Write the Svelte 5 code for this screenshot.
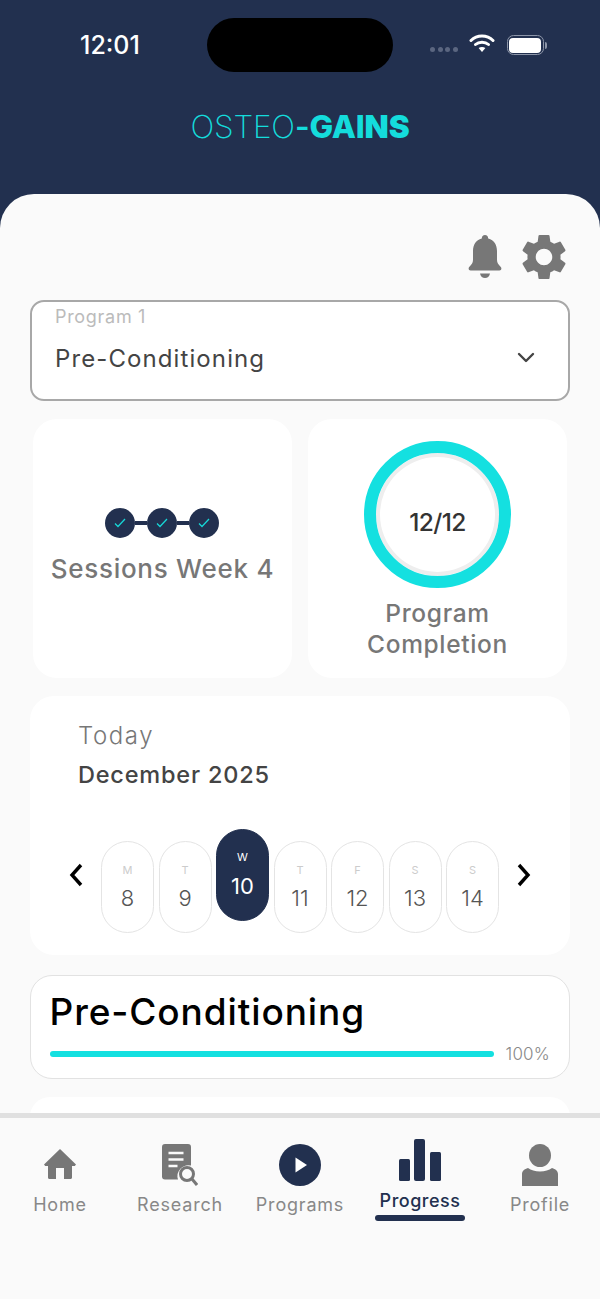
<script>
  const days = [
    { l: 'M', n: 8 }, { l: 'T', n: 9 }, { l: 'W', n: 10, active: true }, { l: 'T', n: 11 },
    { l: 'F', n: 12 }, { l: 'S', n: 13 }, { l: 'S', n: 14 }
  ];
</script>

<div class="screen">
  <header class="top">
    <div class="status">
      <span class="time">12:01</span>
      <div class="island"></div>
      <div class="sys">
        <span class="signal"><i></i><i></i><i></i><i></i></span>
        <svg class="wifi" width="26" height="20" viewBox="0 0 26 20" fill="none" stroke="#fff" stroke-width="3" stroke-linecap="round">
          <path d="M2 7.5C8 1.6 18 1.6 24 7.5" />
          <path d="M6.5 11.5C10 8.4 16 8.4 19.5 11.5" />
          <path d="M13 19l-3.4-3.9c2-1.5 4.8-1.5 6.8 0z" fill="#fff" stroke="none" />
        </svg>
        <span class="battery"><b></b></span>
        <span class="cap"></span>
      </div>
    </div>
    <div class="logo"><span class="thin">OSTEO</span><span class="dash">-</span><span class="bold">GAI</span><span class="heavy">NS</span></div>
  </header>

  <main class="sheet">
    <div class="actions">
      <svg width="34" height="44" viewBox="0 0 34 44" fill="#777">
        <path d="M17 0c2 0 3.200 1.500 3.200 3.500 6 1.600 8.800 6.500 8.800 12.500v9c0 3 1.500 4.500 3.800 7 1.200 1.400.5 3.500-1.500 3.500H2.700c-2 0-2.700-2.100-1.500-3.500C3.500 29.500 5 28 5 25v-9c0-6 2.800-10.900 8.800-12.500C13.800 1.500 15 0 17 0z" />
        <path d="M12 38.500h10c-.6 3-2.500 4.500-5 4.500s-4.400-1.500-5-4.500z" />
      </svg>
      <svg width="44" height="46" viewBox="2.500 2 19 20" fill="#777">
        <path d="M19.140 12.940c.04-.3.06-.61.06-.94 0-.32-.02-.64-.07-.94l2.030-1.580c.18-.14.23-.41.12-.61l-1.920-3.320c-.12-.22-.37-.29-.59-.22l-2.390.96c-.5-.38-1.030-.7-1.620-.94l-.36-2.540c-.04-.24-.24-.41-.48-.41h-3.840c-.24 0-.43.17-.47.41l-.36 2.540c-.59.24-1.130.57-1.620.94l-2.390-.96c-.22-.08-.47 0-.59.22L2.740 8.870c-.12.21-.08.47.12.61l2.030 1.580c-.05.3-.09.63-.09.94s.02.64.07.94l-2.030 1.580c-.18.14-.23.41-.12.61l1.920 3.320c.12.22.37.29.59.22l2.390-.96c.5.38 1.030.7 1.620.94l.36 2.540c.05.24.24.41.48.41h3.840c.24 0 .44-.17.47-.41l.36-2.540c.59-.24 1.130-.56 1.620-.94l2.390.96c.22.08.47 0 .59-.22l1.920-3.320c.12-.22.07-.47-.12-.61l-2.010-1.580zM12 15.600c-1.980 0-3.600-1.620-3.600-3.600s1.620-3.600 3.600-3.600 3.600 1.620 3.600 3.600-1.620 3.600-3.600 3.600z" />
      </svg>
    </div>

    <div class="select">
      <span class="sel-label">Program 1</span>
      <span class="sel-value">Pre-Conditioning</span>
      <svg class="chev" width="18" height="12" viewBox="0 0 18 12" fill="none" stroke="#444" stroke-width="2.400" stroke-linecap="round" stroke-linejoin="round"><path d="M2 2l7 7 7-7" /></svg>
    </div>

    <div class="stats">
      <section class="stat">
        <div class="dots">
          {#each [0, 1, 2] as d, i}
            {#if i > 0}<span class="link"></span>{/if}
            <span class="dot">
              <svg width="12" height="10" viewBox="0 0 12 10" fill="none" stroke="#17d6d6" stroke-width="1.300"><path d="M1 5.500l3 3L11 1" /></svg>
            </span>
          {/each}
        </div>
        <p class="stat-title">Sessions Week 4</p>
      </section>
      <section class="stat right">
        <div class="ring"><span>12/12</span></div>
        <p class="stat-title two">Program<br />Completion</p>
      </section>
    </div>

    <section class="calendar">
      <p class="today">Today</p>
      <p class="month">December 2025</p>
      <div class="week">
        <svg class="arrow" width="16" height="24" viewBox="0 0 16 24" fill="none" stroke="#000" stroke-width="3.400"><path d="M13 2L4 12l9 10" /></svg>
        <div class="pills">
          {#each days as d}
            <div class="pill" class:active={d.active}>
              <span class="pl">{d.l}</span>
              <span class="pn">{d.n}</span>
            </div>
          {/each}
        </div>
        <svg class="arrow next" width="16" height="24" viewBox="0 0 16 24" fill="none" stroke="#000" stroke-width="3.400"><path d="M3 2l9 10L3 22" /></svg>
      </div>
    </section>

    <section class="progress">
      <h2>Pre-Conditioning</h2>
      <div class="bar-row">
        <div class="bar"></div>
        <span class="pct">100%</span>
      </div>
    </section>

    <div class="peek"></div>
  </main>

  <nav class="nav">
    <div class="item">
      <div class="ic"><svg width="32" height="30" viewBox="0 0 32 30" fill="#777"><path d="M16 0l16 15.500-1.200 1.500H28v11.500c0 .9-.6 1.500-1.500 1.500H20V19h-8v11H5.500C4.600 30 4 29.400 4 28.500V17H1.200L0 15.500z" /></svg></div>
      <span>Home</span>
    </div>
    <div class="item">
      <div class="ic"><svg width="36" height="42" viewBox="0 0 36 42" fill="none">
        <path d="M3 0h23a3 3 0 0 1 3 3v18.500a11 11 0 0 0-13 14H3a3 3 0 0 1-3-3V3a3 3 0 0 1 3-3z" fill="#777" />
        <path d="M6.500 9h15M6.500 15.500h15M6.500 22h9" stroke="#fafafa" stroke-width="2.600" />
        <circle cx="25" cy="30" r="6.500" stroke="#777" stroke-width="3" />
        <path d="M30 35l5 6" stroke="#777" stroke-width="3" />
      </svg></div>
      <span>Research</span>
    </div>
    <div class="item">
      <div class="ic"><svg width="42" height="42" viewBox="0 0 42 42"><circle cx="21" cy="21" r="21" fill="#22304f" /><path d="M16.500 13.500L28 21l-11.500 7.500z" fill="#fff" /></svg></div>
      <span>Programs</span>
    </div>
    <div class="item current">
      <div class="ic"><svg width="42" height="42" viewBox="0 0 42 42" fill="#22304f"><rect x="0" y="20" width="11" height="22" rx="1.500" /><rect x="15" y="0" width="11" height="42" rx="2" /><rect x="31" y="13" width="11" height="29" rx="1.500" /></svg></div>
      <span>Progress</span>
      <i class="underline"></i>
    </div>
    <div class="item">
      <div class="ic"><svg width="36" height="42" viewBox="0 0 36 42" fill="#777"><ellipse cx="18" cy="11.500" rx="11" ry="11.500" /><path d="M0 30c0-3 2.500-5 6-6 3 2.300 7 3.500 12 3.500S27 26.300 30 24c3.500 1 6 3 6 6v12H0z" /></svg></div>
      <span>Profile</span>
    </div>
  </nav>
</div>

<style>
  :global(body) { margin: 0; background: #22304f; }
  .screen {
    width: 600px; height: 1299px; display: flex; flex-direction: column;
    background: #22304f; overflow: hidden;
    font-family: "Inter", "Open Sans", sans-serif;
  }
  .top { height: 194px; flex: none; box-sizing: border-box; padding-top: 18px; }
  .status { display: flex; align-items: flex-start; height: 54px; padding-left: 80px; }
  .time { width: 127px; font-size: 25px; font-weight: 500; line-height: 55px; color: #fff; }
  .island { width: 186px; height: 54px; border-radius: 27px; background: #000; }
  .sys { display: flex; align-items: center; height: 54px; margin-left: 37px; }
  .signal { display: flex; gap: 2.500px; margin-top: 8px; }
  .signal i { width: 5px; height: 5px; border-radius: 50%; background: #5b6680; }
  .wifi { margin-left: 11px; margin-top: -5px; }
  .battery { box-sizing: border-box; width: 37px; height: 20px; margin-left: 12px; border: 1.500px solid #8c95a8; border-radius: 6.500px; padding: 1.500px; display: flex; }
  .battery b { flex: 1; background: #fff; border-radius: 4px; }
  .cap { width: 2px; height: 7px; background: #8c95a8; border-radius: 0 2px 2px 0; margin-left: 1px; }
  .logo { margin-top: 36px; text-align: center; color: #14dcdc; font-size: 31.500px; line-height: 38px; white-space: nowrap; letter-spacing: -0.200px; }
  .thin { font-weight: 200; }
  .dash { font-weight: 600; }
  .bold { font-weight: 800; }
  .heavy { font-weight: 900; }

  .sheet {
    height: 919px; flex: none; box-sizing: border-box; background: #fafafa;
    border-radius: 34px 34px 0 0; padding: 40px 30px 0; overflow: hidden;
  }
  .actions { display: flex; justify-content: flex-end; align-items: center; gap: 20px; height: 46px; padding-right: 4px; }
  .select {
    position: relative; box-sizing: border-box; height: 101px; margin-top: 20px;
    border: 2px solid #a8a8a8; border-radius: 14px; background: #fff; padding-left: 23px;
    display: flex; flex-direction: column;
  }
  .sel-label { font-size: 18px; line-height: 30px; color: #bbb; letter-spacing: 0.700px; }
  .sel-value { font-size: 24px; line-height: 34px; margin-top: 10px; color: #444; letter-spacing: 1.100px; }
  .chev { position: absolute; right: 33px; top: 50px; }

  .stats { display: flex; gap: 16px; margin: 18px 3px 0; }
  .stat { width: 259px; height: 259px; box-sizing: border-box; background: #fff; border-radius: 24px; display: flex; flex-direction: column; align-items: center; padding-top: 89px; }
  .stat.right { padding-top: 22px; }
  .dots { display: flex; align-items: center; height: 30px; margin-right: 2px; }
  .dot { width: 30px; height: 30px; border-radius: 50%; background: #22304f; display: flex; align-items: center; justify-content: center; }
  .link { width: 12px; height: 4px; background: #22304f; }
  .stat-title { margin: 14px 0 0; font-size: 26px; line-height: 34px; color: #777; font-weight: 500; letter-spacing: 0.720px; white-space: nowrap; }
  .stat-title.two { margin-top: 10px; font-size: 24.500px; line-height: 31px; text-align: center; letter-spacing: 0.650px; }
  .ring { box-sizing: border-box; width: 147px; height: 147px; border-radius: 50%; border: 12px solid #14e0e0; box-shadow: inset 0 0 0 4px #eee; display: flex; align-items: center; justify-content: center; }
  .ring span { font-size: 24.500px; font-weight: 500; color: #333; margin-top: 14px; letter-spacing: -0.600px; }

  .calendar { box-sizing: border-box; height: 259px; margin-top: 18px; background: #fff; border-radius: 24px; padding: 23px 0 0 48px; }
  .today { margin: 0; font-size: 24px; font-weight: 300; line-height: 34px; color: #777; letter-spacing: 1.600px; }
  .month { margin: 5px 0 0; font-size: 23.500px; font-weight: 500; line-height: 34px; color: #444; letter-spacing: 0.800px; white-space: nowrap; }
  .week { display: flex; align-items: center; margin: 37px 0 0 -10px; height: 104px; }
  .arrow { flex: none; margin-top: -12px; }
  .arrow.next { margin-left: 1px; }
  .pills { display: flex; align-items: flex-end; gap: 4.500px; margin: 0 16px 0 17px; height: 104px; }
  .pill { box-sizing: border-box; width: 53px; height: 92px; border: 1.500px solid #e4e4e4; border-radius: 27px; display: flex; flex-direction: column; align-items: center; padding-top: 21px; background: #fff; }
  .pl { font-size: 11px; line-height: 14px; color: #ccc; }
  .pn { font-size: 22px; line-height: 28px; margin-top: 7px; color: #555; font-weight: 300; }
  .pill.active { margin-bottom: 12px; background: #22304f; border-color: #22304f; padding-top: 20px; }
  .pill.active .pl { color: #fff; }
  .pill.active .pn { color: #fff; font-weight: 400; margin-top: 8px; }

  .progress { box-sizing: border-box; height: 104px; margin-top: 20px; background: #fff; border: 1.500px solid #e2e2e2; border-radius: 22px; padding: 12px 18.500px 0; }
  h2 { margin: 0; font-size: 37px; line-height: 48px; font-weight: 500; color: #000; letter-spacing: 0.900px; white-space: nowrap; }
  .bar-row { display: flex; align-items: center; margin-top: 3px; height: 30px; }
  .bar { width: 444px; height: 6px; border-radius: 3px; background: #14e0e0; }
  .pct { margin-left: 12px; font-size: 17px; color: #888; font-weight: 300; letter-spacing: 0.200px; }
  .peek { height: 40px; margin-top: 18px; background: #fff; border-radius: 20px 20px 0 0; }

  .nav { flex: 1; box-sizing: border-box; display: flex; background: #fafafa; border-top: 5px solid #e0e0e0; }
  .item { width: 120px; display: flex; flex-direction: column; align-items: center; }
  .ic { height: 42px; margin-top: 26px; display: flex; align-items: flex-end; justify-content: center; }
  .item:nth-child(1) .ic { height: 35px; margin-top: 26px; align-items: flex-end; margin-bottom: 7px; }
  .item span { margin-top: 6px; font-size: 18px; line-height: 26px; color: #888; letter-spacing: 0.800px; white-space: nowrap; }
  .item.current .ic { margin-top: 21px; }
  .item.current span { margin-top: 7px; color: #22304f; font-weight: 500; line-height: 26px; letter-spacing: 0.500px; }
  .underline { display: block; width: 90px; height: 6px; border-radius: 3px; background: #22304f; margin-top: 1px; }
</style>
